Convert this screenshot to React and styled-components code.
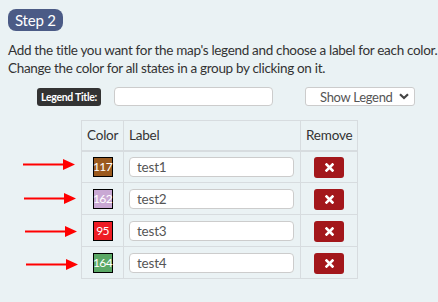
import React from "react";
import styled, { createGlobalStyle } from "styled-components";

const Global = createGlobalStyle`
  html, body { margin: 0; padding: 0; background: #eaf2f4; }
  body { font-family: "Lato", "Noto Sans", sans-serif; color: #333; }
  * { box-sizing: border-box; }
`;

const Page = styled.div`
  width: 438px;
  height: 302px;
  padding: 9px 8px 0 8px;
  position: relative;
  overflow: hidden;
`;

const StepBadge = styled.div`
  display: inline-flex;
  align-items: center;
  height: 22px;
  padding: 0 7px;
  background: #4b5b86;
  color: #fff;
  font-size: 15px;
  letter-spacing: -0.2px;
  border-radius: 8px;
`;

const Intro = styled.p`
  margin: 10px 0 0 0;
  font-size: 13.5px;
  line-height: 18px;
  letter-spacing: -0.32px;
  white-space: nowrap;
  color: #333;
`;

const LegendRow = styled.div`
  display: flex;
  align-items: center;
  margin-top: 10px;
  padding-left: 29px;
  height: 19px;
`;

const LegendLabel = styled.span`
  display: inline-flex;
  align-items: center;
  justify-content: center;
  width: 64px;
  height: 18px;
  background: #333;
  color: #fff;
  font-size: 10.5px;
  font-weight: 700;
  letter-spacing: -0.3px;
  border-radius: 3px;
`;

const TitleInput = styled.input`
  margin: 0 0 0 13px;
  width: 159px;
  height: 19px;
  border: 1px solid #ccc;
  border-radius: 4px;
  background: #fff;
`;

const Select = styled.div`
  margin-left: 32px;
  width: 110px;
  height: 19px;
  border: 1px solid #ccc;
  border-radius: 3px;
  background: #fff;
  display: flex;
  align-items: center;
  justify-content: space-between;
  padding: 0 5px 0 14px;
  font-size: 13px;
  letter-spacing: -0.3px;
  color: #555;
`;

const TableWrap = styled.div`
  position: relative;
  margin-top: 14px;
  padding-left: 73px;
`;

const Table = styled.table`
  border-collapse: collapse;
  table-layout: fixed;
  width: 276px;
  font-size: 13.5px;
  letter-spacing: -0.2px;
`;

const Th = styled.th`
  border: 1px solid #d7dcdf;
  border-bottom: 2px solid #d7dcdf;
  height: 30px;
  font-weight: 400;
  text-align: ${(p) => p.$align || "left"};
  padding: 0 5px;
  width: ${(p) => p.$w}px;
  color: #333;
`;

const Td = styled.td`
  border: 1px solid #d7dcdf;
  height: 32px;
  padding: 0 5px;
  text-align: ${(p) => p.$align || "left"};
  vertical-align: middle;
`;

const Swatch = styled.div`
  width: 20px;
  height: 20px;
  margin: 0 auto;
  border: 1px solid #000;
  background: ${(p) => p.$color};
  color: #fff;
  font-size: 12px;
  display: flex;
  align-items: center;
  justify-content: center;
  letter-spacing: -0.6px;
  overflow: visible;
  white-space: nowrap;
`;

const LabelInput = styled.div`
  width: 165px;
  height: 20px;
  border: 1px solid #ccc;
  border-radius: 4px;
  background: #fff;
  display: flex;
  align-items: center;
  padding-left: 7px;
  font-size: 13.5px;
  color: #555;
`;

const RemoveBtn = styled.button`
  width: 30px;
  height: 21px;
  border: none;
  border-radius: 3px;
  background: #a3171b;
  display: inline-flex;
  align-items: center;
  justify-content: center;
  padding: 0;
  margin-top: 1px;
`;

const Arrow = styled.svg`
  position: absolute;
  left: ${(p) => p.$x}px;
  top: ${(p) => p.$y}px;
`;

const Chevron = () => (
  <svg width="10" height="7" viewBox="0 0 10 7">
    <path d="M1 1.2 L5 5 L9 1.2" fill="none" stroke="#444" strokeWidth="2.2" />
  </svg>
);

const XIcon = () => (
  <svg width="9" height="9" viewBox="0 0 9 9">
    <path d="M1.5 1.5 L7.5 7.5 M7.5 1.5 L1.5 7.5" stroke="#fff" strokeWidth="2.6" strokeLinecap="square" />
  </svg>
);

const rows = [
  { n: 117, color: "#9b5a1e", label: "test1" },
  { n: 162, color: "#c9a8d4", label: "test2" },
  { n: 95, color: "#ee1c24", label: "test3" },
  { n: 164, color: "#5aa865", label: "test4" },
];

const arrows = [
  { x: 23, y: 39 },
  { x: 24, y: 73 },
  { x: 25, y: 106 },
  { x: 26, y: 139 },
];

export default function App() {
  return (
    <>
      <Global />
      <Page>
        <StepBadge>Step 2</StepBadge>
        <Intro>
          Add the title you want for the map's legend and choose a label for each color.
          <br />
          Change the color for all states in a group by clicking on it.
        </Intro>
        <LegendRow>
          <LegendLabel>Legend Title:</LegendLabel>
          <TitleInput />
          <Select>
            <span>Show Legend</span>
            <Chevron />
          </Select>
        </LegendRow>
        <TableWrap>
          {arrows.map((a, i) => (
            <Arrow key={i} $x={a.x - 8} $y={a.y} width="52" height="11" viewBox="0 0 52 11">
              <path d="M0 5.5 H42" stroke="#f00" strokeWidth="2" />
              <path d="M40 0 L52 5.5 L40 11 Z" fill="#f00" />
            </Arrow>
          ))}
          <Table>
            <thead>
              <tr>
                <Th $w={42}>Color</Th>
                <Th $w={177}>Label</Th>
                <Th $w={57} $align="center">Remove</Th>
              </tr>
            </thead>
            <tbody>
              {rows.map((r) => (
                <tr key={r.n}>
                  <Td $align="center">
                    <Swatch $color={r.color}>{r.n}</Swatch>
                  </Td>
                  <Td>
                    <LabelInput>{r.label}</LabelInput>
                  </Td>
                  <Td $align="center">
                    <RemoveBtn>
                      <XIcon />
                    </RemoveBtn>
                  </Td>
                </tr>
              ))}
            </tbody>
          </Table>
        </TableWrap>
      </Page>
    </>
  );
}
